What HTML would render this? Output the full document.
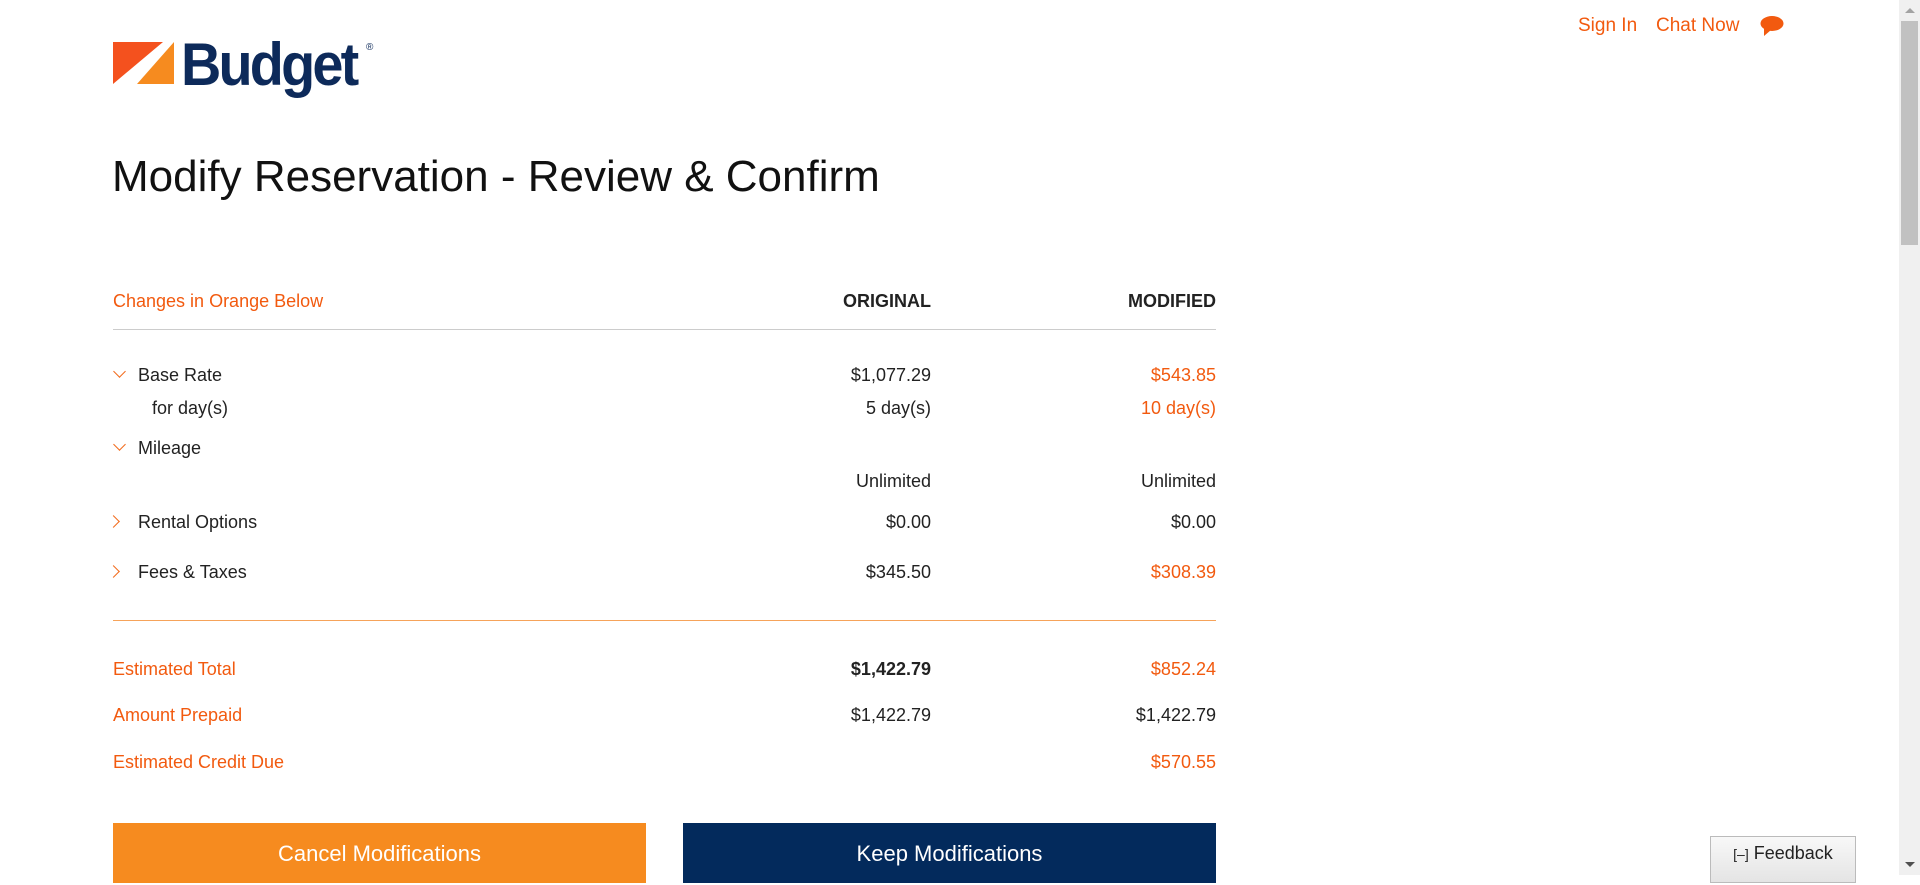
<!DOCTYPE html>
<html><head><meta charset="utf-8"><style>
html,body{margin:0;padding:0;width:1920px;height:875px;overflow:hidden;background:#fff;font-family:"Liberation Sans",sans-serif;}
.a{position:absolute;line-height:24px;white-space:nowrap;font-size:18px;color:#222;}
.o{color:#f25a0f;}
.r{text-align:right;}
.b{font-weight:bold;}
.chev{position:absolute;width:8px;height:8px;border-right:1.8px solid #f26a1b;border-bottom:1.8px solid #f26a1b;}
</style></head><body>
<!-- logo -->
<svg style="position:absolute;left:113px;top:42px" width="62" height="42" viewBox="0 0 62 42">
<polygon points="0,0 50,0 0,42" fill="#f4511e"/>
<polygon points="61,0 61,42 24,42" fill="#f68b1f"/>
</svg>
<div class="a" style="left:181px;top:30px;font-size:60px;line-height:70px;color:#0d2a5a;font-weight:bold;letter-spacing:-3px;transform:scaleX(0.93);transform-origin:left;">Budget</div>
<div class="a" style="left:366px;top:42px;font-size:10px;line-height:12px;color:#0d2a5a;">®</div>
<div class="a o" style="left:1578px;top:14px;font-size:19px;">Sign In</div>
<div class="a o" style="left:1656px;top:14px;font-size:19px;">Chat Now</div>
<svg style="position:absolute;left:1760px;top:15px" width="24" height="22" viewBox="0 0 24 22"><ellipse cx="12" cy="8.5" rx="11.5" ry="7.5" fill="#f25a0f"/><polygon points="4,13 4,21 11,15" fill="#f25a0f"/></svg>
<div class="a" style="left:112px;top:150px;font-size:44px;line-height:54px;color:#111;">Modify Reservation - Review &amp; Confirm</div>

<div class="a o" style="left:113px;top:289px;">Changes in Orange Below</div>
<div class="a b r" style="right:989px;top:289px;">ORIGINAL</div>
<div class="a b r" style="right:704px;top:289px;">MODIFIED</div>
<div style="position:absolute;left:113px;width:1103px;top:329px;height:1px;background:#ccc"></div>

<div class="chev" style="left:115px;top:367px;transform:rotate(45deg)"></div>
<div class="a" style="left:138px;top:363px;">Base Rate</div>
<div class="a r" style="right:989px;top:363px;">$1,077.29</div>
<div class="a r o" style="right:704px;top:363px;">$543.85</div>
<div class="a" style="left:152px;top:396px;">for day(s)</div>
<div class="a r" style="right:989px;top:396px;">5 day(s)</div>
<div class="a r o" style="right:704px;top:396px;">10 day(s)</div>
<div class="chev" style="left:115px;top:440px;transform:rotate(45deg)"></div>
<div class="a" style="left:138px;top:436px;">Mileage</div>
<div class="a r" style="right:989px;top:469px;">Unlimited</div>
<div class="a r" style="right:704px;top:469px;">Unlimited</div>
<div class="chev" style="left:109px;top:517px;transform:rotate(-45deg)"></div>
<div class="a" style="left:138px;top:510px;">Rental Options</div>
<div class="a r" style="right:989px;top:510px;">$0.00</div>
<div class="a r" style="right:704px;top:510px;">$0.00</div>
<div class="chev" style="left:109px;top:567px;transform:rotate(-45deg)"></div>
<div class="a" style="left:138px;top:560px;">Fees &amp; Taxes</div>
<div class="a r" style="right:989px;top:560px;">$345.50</div>
<div class="a r o" style="right:704px;top:560px;">$308.39</div>
<div style="position:absolute;left:113px;width:1103px;top:620px;height:1px;background:#f6a35a"></div>

<div class="a o" style="left:113px;top:657px;">Estimated Total</div>
<div class="a r b" style="right:989px;top:657px;">$1,422.79</div>
<div class="a r o" style="right:704px;top:657px;">$852.24</div>
<div class="a o" style="left:113px;top:703px;">Amount Prepaid</div>
<div class="a r" style="right:989px;top:703px;">$1,422.79</div>
<div class="a r" style="right:704px;top:703px;">$1,422.79</div>
<div class="a o" style="left:113px;top:750px;">Estimated Credit Due</div>
<div class="a r o" style="right:704px;top:750px;">$570.55</div>

<div style="position:absolute;left:113px;top:823px;width:533px;height:60px;background:#f68b1f;color:#fff;font-size:22px;text-align:center;line-height:62px;">Cancel Modifications</div>
<div style="position:absolute;left:683px;top:823px;width:533px;height:60px;background:#032a5c;color:#fff;font-size:22px;text-align:center;line-height:62px;">Keep Modifications</div>

<div style="position:absolute;left:1710px;top:836px;width:144px;height:45px;background:linear-gradient(#f8f8f8,#e4e4e4);border:1px solid #bbb;font-size:18px;color:#222;line-height:32px;text-align:center;"><span style="font-size:14px">[–]</span> Feedback</div>

<div style="position:absolute;left:1899px;top:0;width:21px;height:875px;background:#f0f0f0"></div>
<div style="position:absolute;left:1901px;top:21px;width:17px;height:224px;background:#c1c1c1"></div>
<div style="position:absolute;left:1905px;top:8px;width:0;height:0;border-left:5px solid transparent;border-right:5px solid transparent;border-bottom:5px solid #a3a3a3"></div>
<div style="position:absolute;left:1905px;top:862px;width:0;height:0;border-left:5px solid transparent;border-right:5px solid transparent;border-top:5px solid #505050"></div>
</body></html>
